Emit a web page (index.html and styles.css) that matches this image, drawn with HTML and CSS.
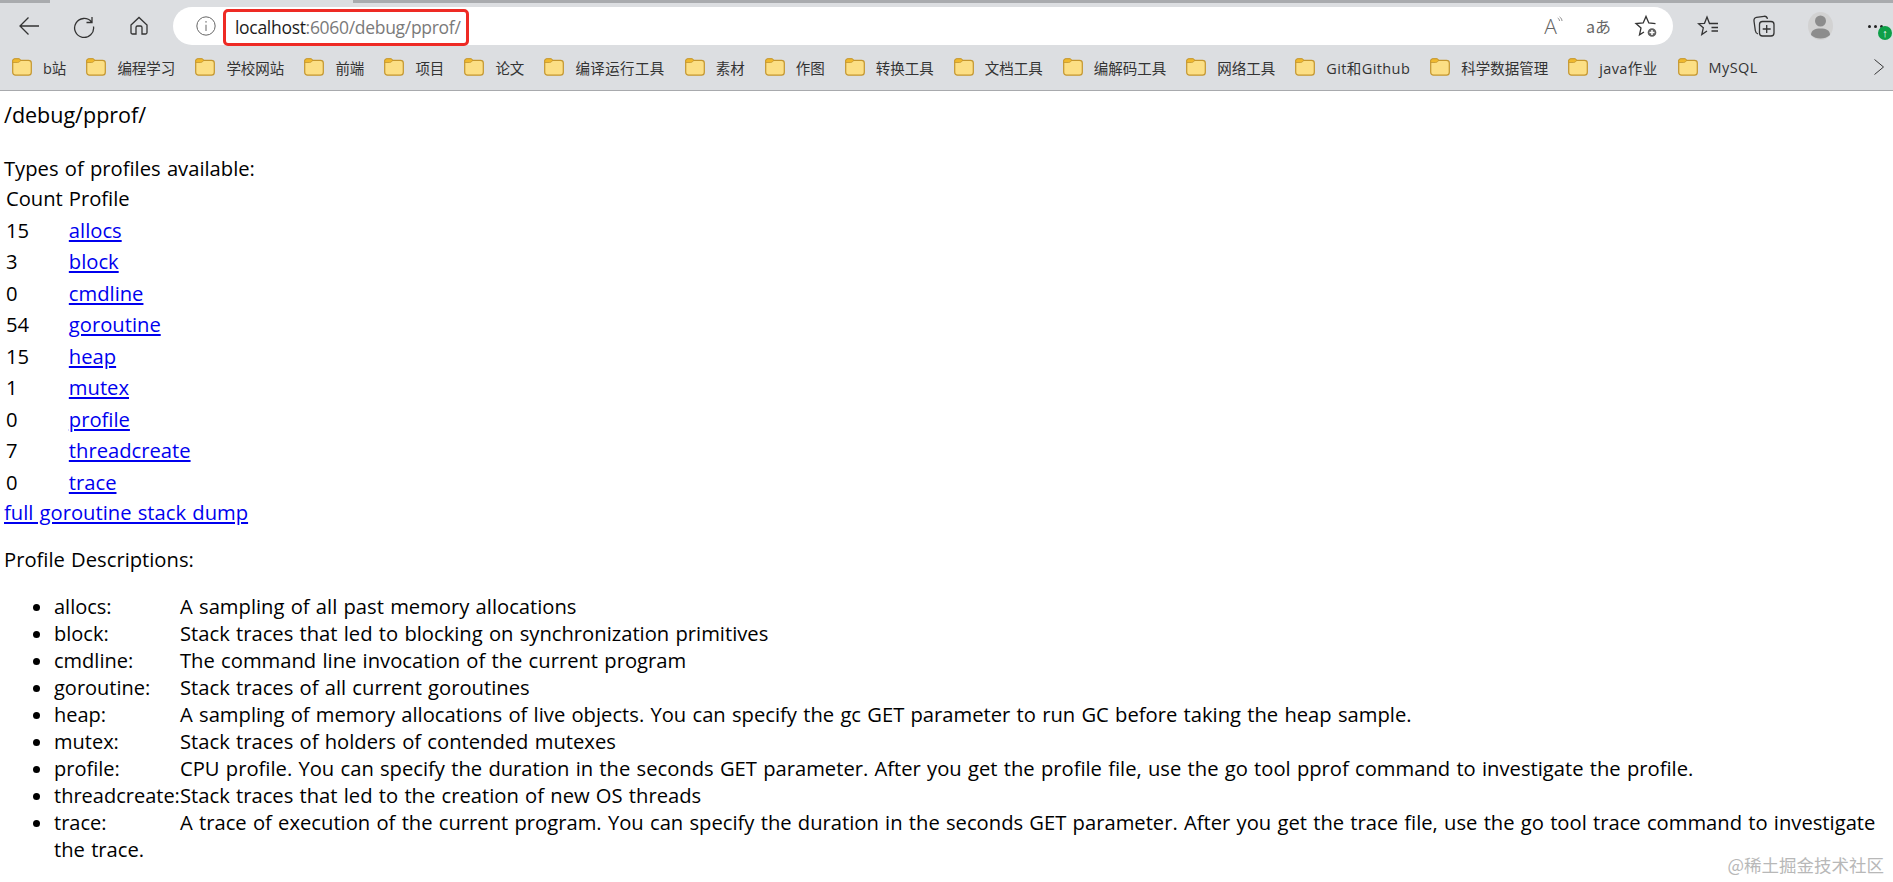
FILE: index.html

```html
<!DOCTYPE html>
<html lang="en">
<head>
    <meta charset="UTF-8">
    <title>/debug/pprof/</title>
    <link rel="stylesheet" href="styles.css">
</head>
<body>
    <svg class="defs" width="0" height="0">
        <symbol id="folder" viewBox="0 0 20 18">
            <path d="M.7 3.500C.7 1.800 1.800.8 3.300.8h3.200c1 0 1.500.6 2 1.500h8c1.600 0 2.800 1 2.800 2.700v9.200c0 1.700-1.200 3-2.800 3H3.500C1.900 17.200.7 15.900.7 14.200z" fill="#fcdf85" stroke="#c4962e" stroke-width="1.200"/>
            <path d="M.7 4.500V3.300C.7 1.800 1.800.8 3.300.8h3.200c1 0 1.600.7 2 1.500-.4 1.300-1.500 2.200-3 2.200z" fill="#f0b92e" stroke="#c4962e" stroke-width=".8"/>
        </symbol>
    </svg>

    <header class="browser">
        <div class="tabstrip"><span class="tab-active"></span></div>
        <div class="toolbar">
            <div class="nav">
                <svg class="ic" viewBox="0 0 24 24"><path d="M22 12H3M11.500 3.500 3 12l8.500 8.500"/></svg>
                <svg class="ic" viewBox="0 0 24 24"><path d="M20 3v5.500h-5.500M19.500 8A9.500 9.500 0 1 0 21.500 12.500"/></svg>
                <svg class="ic" viewBox="0 0 24 24"><path d="M4 11 12 3.500 20 11v7.500c0 1-.7 1.500-1.500 1.500H15v-6.500c0-1-.7-1.500-1.500-1.500h-3c-.8 0-1.500.5-1.500 1.500V20H5.500C4.700 20 4 19.500 4 18.500z"/></svg>
            </div>
            <div class="omnibox">
                <svg class="ic info" viewBox="0 0 24 24"><circle cx="12" cy="12" r="11"/><path d="M12 10.500V18M12 6v2"/></svg>
                <span class="url"><b>localhost</b>:6060/debug/pprof/</span>
                <span class="omni-tools">
                    <span class="read">A<svg viewBox="0 0 8 12"><path d="M1 2c1.500 1 2.200 2.200 2.400 4M3.500 .5c2 1.500 3 3.300 3.200 5.500"/></svg></span>
                    <span class="trans">aあ</span>
                    <svg class="ic" viewBox="0 0 24 24"><path d="M21.500 9.600 14.800 9 12 2.500 9.200 9l-7.200.6 5 4.400-1.500 6.800 4.500-2.800"/><circle class="plus" cx="18" cy="18.500" r="5"/><path class="plus-mark" d="M18 16v5M15.500 18.500h5"/></svg>
                </span>
            </div>
            <div class="actions">
                <svg class="ic" viewBox="0 0 24 24"><path d="M21 9.500h-8.500L10 3 7.500 9.300 1.500 9.700l4.800 4.100-1.500 6.700L10 17M14.500 13.500H21M14.500 17H21"/></svg>
                <svg class="ic" viewBox="0 0 24 24"><rect x="7.500" y="7.500" width="14.500" height="14.500" rx="3"/><path d="M14.700 11v8M10.700 15h8M6 20C4.500 19.500 3.500 18 3.300 16.500L2 7c-.3-2 1-3.500 2.500-3.700L12 2.300c1.500-.2 3 .7 3.500 2.500"/></svg>
                <span class="avatar"><svg viewBox="0 0 25 28"><circle cx="12.500" cy="9" r="5.500"/><path d="M3 23c0-5 4-6.500 9.500-6.500S22 18 22 23c-2.500 2.500-6 3.500-9.500 3.500S5.500 25.500 3 23z"/></svg></span>
                <span class="more"><i></i><i></i><i></i><span class="badge">↑</span></span>
            </div>
        </div>
        <nav class="bookmarks">
            <a class="bm"><svg><use href="#folder"/></svg>b站</a>
            <a class="bm"><svg><use href="#folder"/></svg>编程学习</a>
            <a class="bm"><svg><use href="#folder"/></svg>学校网站</a>
            <a class="bm"><svg><use href="#folder"/></svg>前端</a>
            <a class="bm"><svg><use href="#folder"/></svg>项目</a>
            <a class="bm"><svg><use href="#folder"/></svg>论文</a>
            <a class="bm wide"><svg><use href="#folder"/></svg>编译运行工具</a>
            <a class="bm"><svg><use href="#folder"/></svg>素材</a>
            <a class="bm"><svg><use href="#folder"/></svg>作图</a>
            <a class="bm"><svg><use href="#folder"/></svg>转换工具</a>
            <a class="bm"><svg><use href="#folder"/></svg>文档工具</a>
            <a class="bm"><svg><use href="#folder"/></svg>编解码工具</a>
            <a class="bm"><svg><use href="#folder"/></svg>网络工具</a>
            <a class="bm latin"><svg><use href="#folder"/></svg>Git和Github</a>
            <a class="bm"><svg><use href="#folder"/></svg>科学数据管理</a>
            <a class="bm latin"><svg><use href="#folder"/></svg>java作业</a>
            <a class="bm latin"><svg><use href="#folder"/></svg>MySQL</a>
            <svg class="ic chevron" viewBox="0 0 24 24"><path d="M6 2l12 10L6 22"/></svg>
        </nav>
    </header>

    <main class="page">
        <div class="title">/debug/pprof/</div>
        <p>Types of profiles available:</p>
        <table>
            <thead><tr><td>Count</td><td>Profile</td></tr></thead>
            <tbody>
                <tr><td>15</td><td><a href="#">allocs</a></td></tr>
                <tr><td>3</td><td><a href="#">block</a></td></tr>
                <tr><td>0</td><td><a href="#">cmdline</a></td></tr>
                <tr><td>54</td><td><a href="#">goroutine</a></td></tr>
                <tr><td>15</td><td><a href="#">heap</a></td></tr>
                <tr><td>1</td><td><a href="#">mutex</a></td></tr>
                <tr><td>0</td><td><a href="#">profile</a></td></tr>
                <tr><td>7</td><td><a href="#">threadcreate</a></td></tr>
                <tr><td>0</td><td><a href="#">trace</a></td></tr>
            </tbody>
        </table>
        <a class="dump" href="#">full goroutine stack dump</a>
        <p class="desc">Profile Descriptions:</p>
        <ul>
            <li><span class="name">allocs:</span>A sampling of all past memory allocations</li>
            <li><span class="name">block:</span>Stack traces that led to blocking on synchronization primitives</li>
            <li><span class="name">cmdline:</span>The command line invocation of the current program</li>
            <li><span class="name">goroutine:</span>Stack traces of all current goroutines</li>
            <li><span class="name">heap:</span>A sampling of memory allocations of live objects. You can specify the gc GET parameter to run GC before taking the heap sample.</li>
            <li><span class="name">mutex:</span>Stack traces of holders of contended mutexes</li>
            <li><span class="name">profile:</span>CPU profile. You can specify the duration in the seconds GET parameter. After you get the profile file, use the go tool pprof command to investigate the profile.</li>
            <li><span class="name">threadcreate:</span>Stack traces that led to the creation of new OS threads</li>
            <li><span class="name">trace:</span>A trace of execution of the current program. You can specify the duration in the seconds GET parameter. After you get the trace file, use the go tool trace command to investigate the trace.</li>
        </ul>
    </main>

    <div class="watermark">@稀土掘金技术社区</div>
</body>
</html>
```

FILE: styles.css

```css
html, body { margin: 0; height: 100%; overflow: hidden; }
body { font-family: "Open Sans", "Noto Sans", sans-serif; background-color: #fff; color: #000; position: relative; }
.defs { position: absolute; }

.browser { background-color: #dcdee1; border-bottom: 1px solid #a8aaad; height: 90px; overflow: hidden; }
.tabstrip { height: 3px; background-color: #a9abae; padding-left: 50px; }
.tab-active { display: block; width: 303px; height: 3px; background-color: #dcdee1; }

.ic { width: 24px; height: 24px; fill: none; stroke: #333; stroke-width: 1.300; flex: none; }

.toolbar { display: flex; align-items: center; height: 46px; }
.nav { display: flex; align-items: center; gap: 31px; padding-left: 17px; width: 173px; box-sizing: border-box; }
.omnibox { width: 1500px; height: 38px; background-color: #fff; border-radius: 19px; display: flex; align-items: center; box-sizing: border-box; padding: 0 15px 0 23px; }
.info { width: 20px; height: 20px; stroke: #666; stroke-width: 1.200; margin-right: 7px; }
.url { border: 3px solid #ee2a24; border-radius: 5px; height: 37px; width: 246px; margin-top: 2px; box-sizing: border-box; display: flex; align-items: center; padding-left: 9px; font-size: 17.500px; letter-spacing: -.3px; color: #7a7a7a; background: #fff; white-space: pre; }
.url b { font-weight: 400; color: #1c1c1c; }
.omni-tools { margin-left: auto; display: flex; align-items: center; gap: 23px; color: #666; }
.read { font-size: 21px; line-height: 1; display: flex; align-items: flex-start; font-weight: 300; }
.read svg { width: 6px; height: 10px; fill: none; stroke: #666; }
.trans { font-size: 16px; font-family: "Noto Sans CJK JP", "Noto Sans", sans-serif; }
.plus { fill: #5f5f5f; stroke: #fff; }
.plus-mark { stroke: #fff; stroke-width: 1.500; }

.actions { display: flex; align-items: center; gap: 31px; padding-left: 24px; }
.avatar { width: 25px; height: 28px; background-color: #d2d2d2; border-radius: 50%; margin-left: 1px; display: flex; }
.avatar svg { width: 25px; height: 28px; fill: #8c8c8c; }
.more { position: relative; display: flex; gap: 3px; margin-left: 4px; }
.more i { width: 3px; height: 3px; border-radius: 50%; background-color: #222; }
.badge { position: absolute; left: 10px; top: 1px; width: 14px; height: 14px; background-color: #0e9f48; border-radius: 50%; color: #fff; font-size: 11px; text-align: center; line-height: 14px; }

.bookmarks { display: flex; align-items: center; height: 36px; padding-left: 12px; gap: 20px; position: relative; }
.bm { display: flex; align-items: center; gap: 11px; font-family: "Open Sans", "Noto Sans CJK SC", sans-serif; font-size: 14.500px; color: #333; white-space: nowrap; }
.bm.wide { letter-spacing: .4px; }
.bm.latin { letter-spacing: .4px; }
.bm svg { width: 20px; height: 18px; flex: none; }
.chevron { position: absolute; right: 5px; top: 9px; width: 18px; height: 18px; }

.page { font-size: 20.200px; word-spacing: 1px; line-height: 27px; padding: 10px 4px 0; }
.title { font-size: 21.500px; word-spacing: 0; margin-bottom: 27px; }
.page p { margin: 0; }
table { border-spacing: 2px 5px; margin-top: -2px; }
td { padding: 0; line-height: 26.500px; }
td:first-child { padding-right: 4px; }
a { color: #0000ee; }
.dump { display: block; margin-top: -1.500px; }
.page .desc { margin-top: 20px; }
ul { margin: 20px 0 0; padding-left: 50px; }
.name { display: inline-block; width: 126px; font-size: 20px; }

.watermark { position: absolute; right: 9px; bottom: 8px; font-family: "Noto Sans CJK SC", sans-serif; font-size: 17.500px; line-height: 18px; color: #b8b8b8; }
```
